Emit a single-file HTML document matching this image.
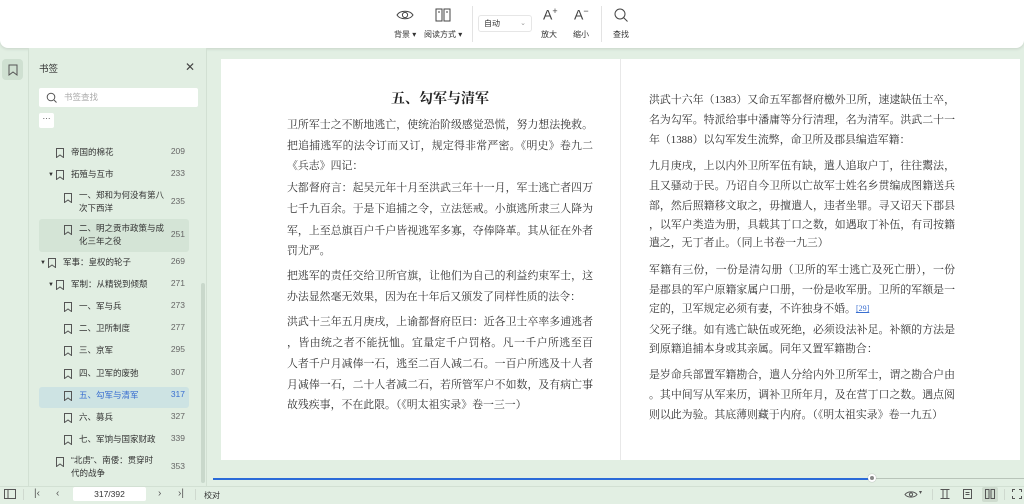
<!DOCTYPE html>
<html><head><meta charset="utf-8">
<style>
*{margin:0;padding:0;box-sizing:border-box}
body{width:1024px;height:504px;overflow:hidden;background:#e2efe3;font-family:"Liberation Sans","Noto Sans CJK SC",sans-serif;color:#333;position:relative}
.abs{position:absolute}
.tb{left:0;top:0;width:1024px;height:48px;background:#fff;border-radius:0 0 8px 8px;box-shadow:0 1px 3px rgba(0,0,0,.12)}
.lbl{font-size:8px;color:#333;white-space:nowrap}
.rail{left:0;top:48px;width:29px;height:438px;border-right:1px solid #d2e0d3}
.panel{left:29px;top:48px;width:178px;height:438px;border-right:1px solid #d2e0d3;background:#e1eee2}
.it{position:absolute;font-size:8.5px;color:#333;line-height:13px}
.num{position:absolute;left:138px;font-size:8.5px;color:#666;width:18px;text-align:right}
.bm{position:absolute;width:8px;height:10px}
.page{background:#fff;top:59px;height:401px}
.ln{position:absolute;font-family:"Liberation Serif","Noto Serif CJK SC",serif;font-size:10.9px;color:#333;white-space:nowrap;line-height:16px;width:306px}
.j{text-align:justify;text-align-last:justify}
</style></head><body>
<div class="abs tb">
  <svg class="abs" style="left:396px;top:8px" width="18" height="14" viewBox="0 0 18 14"><path d="M1 7C4 2 14 2 17 7C14 12 4 12 1 7Z" fill="none" stroke="#444" stroke-width="1"/><circle cx="9" cy="7" r="2.6" fill="none" stroke="#444"/></svg>
  <div class="abs lbl" style="left:394px;top:29px">背景 ▾</div>
  <svg class="abs" style="left:435px;top:8px" width="16" height="14" viewBox="0 0 16 14"><path d="M1 1H7V13H1Z M9 1H15V13H9Z M3 4H5 M11 4H13" fill="none" stroke="#444" stroke-width="1"/></svg>
  <div class="abs lbl" style="left:424px;top:29px">阅读方式 ▾</div>
  <div class="abs" style="left:472px;top:6px;width:1px;height:36px;background:#e3e3e3"></div>
  <div class="abs" style="left:478px;top:15px;width:54px;height:17px;border:1px solid #e6e6e6;border-radius:3px;font-size:8px;line-height:15px;padding-left:5px">自动<span style="position:absolute;right:5px;color:#999;font-size:7px">⌄</span></div>
  <div class="abs" style="left:543px;top:6px;font-size:14px;color:#444">A<sup style="font-size:9px">+</sup></div>
  <div class="abs lbl" style="left:541px;top:29px">放大</div>
  <div class="abs" style="left:574px;top:6px;font-size:14px;color:#444">A<sup style="font-size:9px">−</sup></div>
  <div class="abs lbl" style="left:573px;top:29px">缩小</div>
  <div class="abs" style="left:601px;top:6px;width:1px;height:36px;background:#e3e3e3"></div>
  <svg class="abs" style="left:613px;top:7px" width="16" height="16" viewBox="0 0 16 16"><circle cx="7" cy="7" r="5" fill="none" stroke="#444"/><path d="M10.5 10.5L14.5 14.5" stroke="#444"/></svg>
  <div class="abs lbl" style="left:613px;top:29px">查找</div>
</div>

<div class="abs rail">
  <div class="abs" style="left:2px;top:11px;width:21px;height:21px;background:#cfe0d1;border-radius:4px"></div>
  <svg class="abs" style="left:8px;top:16px" width="10" height="12" viewBox="0 0 10 12"><path d="M1 1H9V11L5 8L1 11Z" fill="none" stroke="#555"/></svg>
</div>
<div class="abs panel">
  <div class="it" style="left:10px;top:15px;font-size:9.5px">书签</div>
  <div class="it" style="left:156px;top:13px;font-size:12px;color:#444">✕</div>
  <div class="abs" style="left:10px;top:40px;width:159px;height:19px;background:#fff;border-radius:2px"></div>
  <svg class="abs" style="left:17px;top:44px" width="11" height="11" viewBox="0 0 11 11"><circle cx="5" cy="5" r="3.8" fill="none" stroke="#555"/><path d="M8 8L10.5 10.5" stroke="#555"/></svg>
  <div class="it" style="left:35px;top:43px;color:#aaa">书签查找</div>
  <div class="abs" style="left:10px;top:65px;width:15px;height:15px;background:#fff;border-radius:2px;font-size:8px;text-align:center;line-height:11px">···</div>

  <div class="abs" style="left:10px;top:171px;width:150px;height:33px;background:#d4e4d6;border-radius:3px"></div>
  <div class="abs" style="left:10px;top:339px;width:150px;height:21px;background:#cde3e3;border-radius:3px"></div>
  <div class="abs" style="left:172px;top:235px;width:4px;height:200px;background:#c9d8cb;border-radius:2px"></div>

  <svg class="bm" style="left:27px;top:100px" viewBox="0 0 8 10"><path d="M.5 .5H7.5V9.5L4 7L.5 9.5Z" fill="none" stroke="#555"/></svg>
  <div class="it" style="left:42px;top:98px">帝国的棉花</div><div class="num" style="top:98px">209</div>
  <div class="it" style="left:19px;top:121px;font-size:6px">▼</div>
  <svg class="bm" style="left:27px;top:122px" viewBox="0 0 8 10"><path d="M.5 .5H7.5V9.5L4 7L.5 9.5Z" fill="none" stroke="#555"/></svg>
  <div class="it" style="left:42px;top:120px">拓殖与互市</div><div class="num" style="top:120px">233</div>
  <svg class="bm" style="left:35px;top:145px" viewBox="0 0 8 10"><path d="M.5 .5H7.5V9.5L4 7L.5 9.5Z" fill="none" stroke="#555"/></svg>
  <div class="it" style="left:50px;top:141px">一、郑和为何没有第八<br>次下西洋</div><div class="num" style="top:148px">235</div>
  <svg class="bm" style="left:35px;top:177px" viewBox="0 0 8 10"><path d="M.5 .5H7.5V9.5L4 7L.5 9.5Z" fill="none" stroke="#555"/></svg>
  <div class="it" style="left:50px;top:174px">二、明之贡市政策与成<br>化三年之役</div><div class="num" style="top:181px">251</div>
  <div class="it" style="left:11px;top:209px;font-size:6px">▼</div>
  <svg class="bm" style="left:19px;top:210px" viewBox="0 0 8 10"><path d="M.5 .5H7.5V9.5L4 7L.5 9.5Z" fill="none" stroke="#555"/></svg>
  <div class="it" style="left:34px;top:208px">军事：皇权的轮子</div><div class="num" style="top:208px">269</div>
  <div class="it" style="left:19px;top:231px;font-size:6px">▼</div>
  <svg class="bm" style="left:27px;top:232px" viewBox="0 0 8 10"><path d="M.5 .5H7.5V9.5L4 7L.5 9.5Z" fill="none" stroke="#555"/></svg>
  <div class="it" style="left:42px;top:230px">军制：从精锐到倾颓</div><div class="num" style="top:230px">271</div>

  <svg class="bm" style="left:35px;top:254px" viewBox="0 0 8 10"><path d="M.5 .5H7.5V9.5L4 7L.5 9.5Z" fill="none" stroke="#555"/></svg>
  <div class="it" style="left:50px;top:252px">一、军与兵</div><div class="num" style="top:252px">273</div>
  <svg class="bm" style="left:35px;top:276px" viewBox="0 0 8 10"><path d="M.5 .5H7.5V9.5L4 7L.5 9.5Z" fill="none" stroke="#555"/></svg>
  <div class="it" style="left:50px;top:274px">二、卫所制度</div><div class="num" style="top:274px">277</div>
  <svg class="bm" style="left:35px;top:298px" viewBox="0 0 8 10"><path d="M.5 .5H7.5V9.5L4 7L.5 9.5Z" fill="none" stroke="#555"/></svg>
  <div class="it" style="left:50px;top:296px">三、京军</div><div class="num" style="top:296px">295</div>
  <svg class="bm" style="left:35px;top:321px" viewBox="0 0 8 10"><path d="M.5 .5H7.5V9.5L4 7L.5 9.5Z" fill="none" stroke="#555"/></svg>
  <div class="it" style="left:50px;top:319px">四、卫军的废弛</div><div class="num" style="top:319px">307</div>
  <svg class="bm" style="left:35px;top:343px" viewBox="0 0 8 10"><path d="M.5 .5H7.5V9.5L4 7L.5 9.5Z" fill="none" stroke="#555"/></svg>
  <div class="it" style="left:50px;top:341px;color:#3a6fd0">五、勾军与清军</div><div class="num" style="top:341px;color:#3a6fd0">317</div>
  <svg class="bm" style="left:35px;top:365px" viewBox="0 0 8 10"><path d="M.5 .5H7.5V9.5L4 7L.5 9.5Z" fill="none" stroke="#555"/></svg>
  <div class="it" style="left:50px;top:363px">六、募兵</div><div class="num" style="top:363px">327</div>
  <svg class="bm" style="left:35px;top:387px" viewBox="0 0 8 10"><path d="M.5 .5H7.5V9.5L4 7L.5 9.5Z" fill="none" stroke="#555"/></svg>
  <div class="it" style="left:50px;top:385px">七、军饷与国家财政</div><div class="num" style="top:385px">339</div>
  <svg class="bm" style="left:27px;top:409px" viewBox="0 0 8 10"><path d="M.5 .5H7.5V9.5L4 7L.5 9.5Z" fill="none" stroke="#555"/></svg>
  <div class="it" style="left:42px;top:406px">“北虏”、南倭：贯穿时<br>代的战争</div><div class="num" style="top:413px">353</div>
</div>

<div class="abs page" style="left:221px;width:399px"></div>
<div class="abs page" style="left:621px;width:399px"></div>
<div class="abs" style="left:620px;top:59px;width:1px;height:401px;background:#e8e8e8"></div>

<div class="ln" style="left:287px;top:92px;font-size:14px;font-weight:bold;text-align:center;color:#222">五、勾军与清军</div>
<div class="ln j" style="left:287px;top:117px">卫所军士之不断地逃亡，使统治阶级感觉恐慌，努力想法挽救。</div>
<div class="ln j" style="left:287px;top:138px">把追捕逃军的法令订而又订，规定得非常严密。《明史》卷九二</div>
<div class="ln" style="left:287px;top:158px">《兵志》四记：</div>
<div class="ln j" style="left:287px;top:180px">大都督府言：起吴元年十月至洪武三年十一月，军士逃亡者四万</div>
<div class="ln j" style="left:287px;top:201px">七千九百余。于是下追捕之令，立法惩戒。小旗逃所隶三人降为</div>
<div class="ln j" style="left:287px;top:223px">军，上至总旗百户千户皆视逃军多寡，夺俸降革。其从征在外者</div>
<div class="ln" style="left:287px;top:243px">罚尤严。</div>
<div class="ln j" style="left:287px;top:268px">把逃军的责任交给卫所官旗，让他们为自己的利益约束军士，这</div>
<div class="ln" style="left:287px;top:289px">办法显然毫无效果，因为在十年后又颁发了同样性质的法令：</div>
<div class="ln j" style="left:287px;top:314px">洪武十三年五月庚戌，上谕都督府臣曰：近各卫士卒率多逋逃者</div>
<div class="ln j" style="left:287px;top:335px">，皆由统之者不能抚恤。宜量定千户罚格。凡一千户所逃至百</div>
<div class="ln j" style="left:287px;top:356px">人者千户月减俸一石，逃至二百人减二石。一百户所逃及十人者</div>
<div class="ln j" style="left:287px;top:377px">月减俸一石，二十人者减二石，若所管军户不如数，及有病亡事</div>
<div class="ln" style="left:287px;top:397px">故残疾事，不在此限。（《明太祖实录》卷一三一）</div>

<div class="ln j" style="left:649px;top:92px">洪武十六年（1383）又命五军都督府檄外卫所，速逮缺伍士卒，</div>
<div class="ln j" style="left:649px;top:112px">名为勾军。特派给事中潘庸等分行清理，名为清军。洪武二十一</div>
<div class="ln" style="left:649px;top:132px">年（1388）以勾军发生流弊，命卫所及郡县编造军籍：</div>
<div class="ln j" style="left:649px;top:158px">九月庚戌，上以内外卫所军伍有缺，遣人追取户丁，往往鬻法，</div>
<div class="ln j" style="left:649px;top:178px">且又骚动于民。乃诏自今卫所以亡故军士姓名乡贯编成图籍送兵</div>
<div class="ln j" style="left:649px;top:198px">部，然后照籍移文取之，毋擅遣人，违者坐罪。寻又诏天下郡县</div>
<div class="ln j" style="left:649px;top:217px">，以军户类造为册，具载其丁口之数，如遇取丁补伍，有司按籍</div>
<div class="ln" style="left:649px;top:235px">遣之，无丁者止。（同上书卷一九三）</div>
<div class="ln j" style="left:649px;top:262px">军籍有三份，一份是清勾册（卫所的军士逃亡及死亡册），一份</div>
<div class="ln j" style="left:649px;top:282px">是郡县的军户原籍家属户口册，一份是收军册。卫所的军额是一</div>
<div class="ln" style="left:649px;top:301px">定的，卫军规定必须有妻，不许独身不婚。<span style="color:#3a6fd0;font-size:8px;text-decoration:underline;vertical-align:top">[29]</span></div>
<div class="ln j" style="left:649px;top:322px">父死子继。如有逃亡缺伍或死绝，必须设法补足。补额的方法是</div>
<div class="ln" style="left:649px;top:341px">到原籍追捕本身或其亲属。同年又置军籍勘合：</div>
<div class="ln j" style="left:649px;top:367px">是岁命兵部置军籍勘合，遣人分给内外卫所军士，谓之勘合户由</div>
<div class="ln j" style="left:649px;top:387px">。其中间写从军来历，调补卫所年月，及在营丁口之数。遇点阅</div>
<div class="ln" style="left:649px;top:407px">则以此为验。其底薄则藏于内府。（《明太祖实录》卷一九五）</div>

<div class="abs" style="left:213px;top:478px;width:659px;height:1.5px;background:#2a6ad8"></div>
<div class="abs" style="left:872px;top:478px;width:152px;height:1px;background:#b8c4b9"></div>
<div class="abs" style="left:868px;top:474px;width:8px;height:8px;border-radius:50%;background:#888;border:2px solid #fff;box-shadow:0 0 1px #888"></div>

<div class="abs" style="left:0;top:486px;width:1024px;height:18px;border-top:1px solid #d2e0d3;background:#e2efe3"></div>
<svg class="abs" style="left:4px;top:489px" width="12" height="10" viewBox="0 0 12 10"><path d="M.5 .5H11.5V9.5H.5Z M4 .5V9.5" fill="none" stroke="#555"/></svg>
<div class="abs" style="left:23px;top:489px;width:1px;height:11px;background:#cfd9cf"></div>
<div class="abs lbl" style="left:34px;top:488px;font-size:10px;color:#555">|‹</div>
<div class="abs lbl" style="left:56px;top:488px;font-size:10px;color:#555">‹</div>
<div class="abs" style="left:73px;top:487px;width:73px;height:14px;background:#fff;border-radius:2px;font-size:8.5px;text-align:center;line-height:14px">317/392</div>
<div class="abs lbl" style="left:158px;top:488px;font-size:10px;color:#555">›</div>
<div class="abs lbl" style="left:178px;top:488px;font-size:10px;color:#555">›|</div>
<div class="abs" style="left:195px;top:489px;width:1px;height:11px;background:#cfd9cf"></div>
<div class="abs lbl" style="left:204px;top:490px">校对</div>

<svg class="abs" style="left:904px;top:490px" width="14" height="9" viewBox="0 0 14 9"><path d="M1 4.5C3.5 1 10.5 1 13 4.5C10.5 8 3.5 8 1 4.5Z" fill="none" stroke="#555"/><circle cx="7" cy="4.5" r="1.6" fill="none" stroke="#555"/></svg>
<div class="abs lbl" style="left:919px;top:489px;font-size:6px;color:#555">▾</div>
<div class="abs" style="left:932px;top:489px;width:1px;height:11px;background:#cfd9cf"></div>
<svg class="abs" style="left:940px;top:489px" width="10" height="10" viewBox="0 0 10 10"><path d="M.5 .5H9.5M.5 9.5H9.5M3 .5V9.5M7 .5V9.5" fill="none" stroke="#555"/></svg>
<svg class="abs" style="left:963px;top:489px" width="9" height="10" viewBox="0 0 9 10"><path d="M.5 .5H8.5V9.5H.5Z M2.5 3.5H6.5M2.5 5.5H6.5" fill="none" stroke="#555"/></svg>
<div class="abs" style="left:982px;top:487px;width:16px;height:15px;background:#cfdccf;border-radius:2px"></div>
<svg class="abs" style="left:985px;top:489px" width="10" height="10" viewBox="0 0 10 10"><path d="M.5 .5H4V9.5H.5Z M6 .5H9.5V9.5H6Z" fill="none" stroke="#555"/></svg>
<div class="abs" style="left:1004px;top:489px;width:1px;height:11px;background:#cfd9cf"></div>
<svg class="abs" style="left:1012px;top:489px" width="10" height="10" viewBox="0 0 10 10"><path d="M.5 3V.5H3M7 .5H9.5V3M9.5 7V9.5H7M3 9.5H.5V7" fill="none" stroke="#555"/></svg>
</body></html>
